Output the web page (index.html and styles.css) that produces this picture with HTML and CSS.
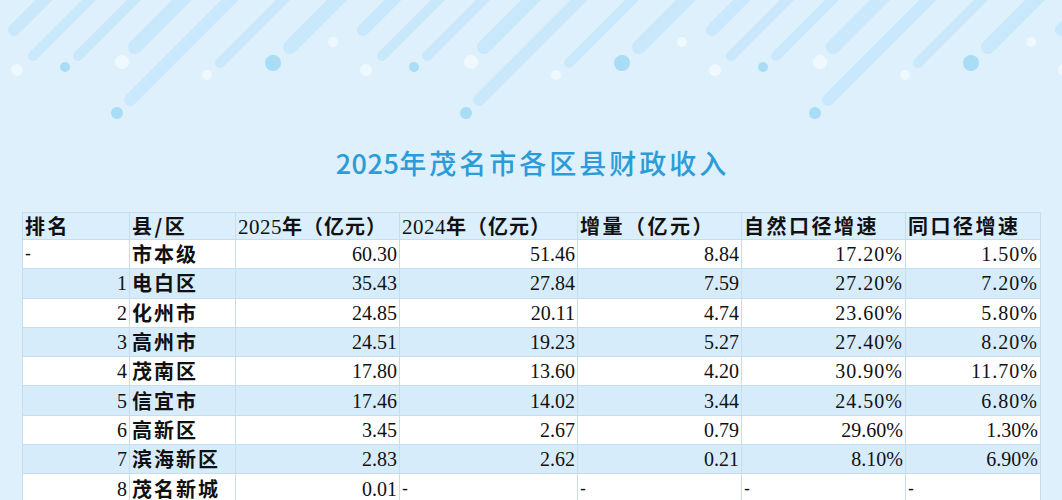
FILE: index.html
```html
<!DOCTYPE html>
<html lang="zh-CN">
<head>
<meta charset="utf-8">
<title>2025年茂名市各区县财政收入</title>
<link rel="stylesheet" href="styles.css">
</head>
<body>
<svg class="deco" width="1062" height="140" viewBox="0 0 1062 140" aria-hidden="true">
  <defs>
    <g id="tile">
      <g stroke="#c9e8fb" stroke-linecap="round">
        <line x1="14" y1="30" x2="54" y2="-10" stroke-width="12"/>
        <line x1="33" y1="56" x2="99" y2="-10" stroke-width="10"/>
        <line x1="78" y1="56" x2="144" y2="-10" stroke-width="10"/>
        <line x1="135" y1="47" x2="192" y2="-10" stroke-width="14"/>
        <line x1="130" y1="100" x2="240" y2="-10" stroke-width="12"/>
        <line x1="220" y1="63" x2="293" y2="-10" stroke-width="10"/>
        <line x1="290" y1="47" x2="347" y2="-10" stroke-width="14"/>
      </g>
      <g fill="#a9dcf5">
        <circle cx="65" cy="67" r="5"/>
        <circle cx="117" cy="113" r="6"/>
        <circle cx="273" cy="63" r="8"/>
      </g>
      <g fill="#eef8fe">
        <circle cx="17" cy="70" r="6"/>
        <circle cx="122" cy="62" r="7"/>
        <circle cx="207" cy="75" r="5"/>
        <circle cx="333" cy="42" r="5"/>
      </g>
    </g>
  </defs>
  <use href="#tile" x="-349"/>
  <use href="#tile" x="0"/>
  <use href="#tile" x="349"/>
  <use href="#tile" x="698"/>
  <use href="#tile" x="1047"/>
</svg>

<main class="page">
  <h1 class="title"><span class="title-num">2025</span>年茂名市各区县财政收入</h1>
  <table class="data">
    <colgroup>
      <col class="c-rank"><col class="c-name"><col class="c-y25"><col class="c-y24"><col class="c-inc"><col class="c-nat"><col class="c-same">
    </colgroup>
    <thead>
      <tr>
        <th>排名</th><th>县/区</th><th class="unit"><span class="num">2025</span>年（亿元）</th><th class="unit"><span class="num">2024</span>年（亿元）</th><th>增量（亿元）</th><th>自然口径增速</th><th>同口径增速</th>
      </tr>
    </thead>
    <tbody>
      <tr class="w"><td class="dash">-</td><td class="name">市本级</td><td>60.30</td><td>51.46</td><td>8.84</td><td class="pct">17.20%</td><td class="pct">1.50%</td></tr>
      <tr class="b"><td>1</td><td class="name">电白区</td><td>35.43</td><td>27.84</td><td>7.59</td><td class="pct">27.20%</td><td class="pct">7.20%</td></tr>
      <tr class="w"><td>2</td><td class="name">化州市</td><td>24.85</td><td>20.11</td><td>4.74</td><td class="pct">23.60%</td><td class="pct">5.80%</td></tr>
      <tr class="b"><td>3</td><td class="name">高州市</td><td>24.51</td><td>19.23</td><td>5.27</td><td class="pct">27.40%</td><td class="pct">8.20%</td></tr>
      <tr class="w"><td>4</td><td class="name">茂南区</td><td>17.80</td><td>13.60</td><td>4.20</td><td class="pct">30.90%</td><td class="pct">11.70%</td></tr>
      <tr class="b"><td>5</td><td class="name">信宜市</td><td>17.46</td><td>14.02</td><td>3.44</td><td class="pct">24.50%</td><td class="pct">6.80%</td></tr>
      <tr class="w"><td>6</td><td class="name">高新区</td><td>3.45</td><td>2.67</td><td>0.79</td><td>29.60%</td><td>1.30%</td></tr>
      <tr class="b"><td>7</td><td class="name">滨海新区</td><td>2.83</td><td>2.62</td><td>0.21</td><td>8.10%</td><td>6.90%</td></tr>
      <tr class="w"><td>8</td><td class="name">茂名新城</td><td>0.01</td><td class="dash">-</td><td class="dash">-</td><td class="dash">-</td><td class="dash">-</td></tr>
    </tbody>
  </table>
</main>
</body>
</html>
```

FILE: styles.css
```css
html, body {
  margin: 0;
  padding: 0;
}

body {
  width: 1062px;
  height: 500px;
  overflow: hidden;
  background: #ddf0fc;
  position: relative;
  font-family: "Liberation Serif", "Noto Sans CJK SC", serif;
  color: #111;
}

.deco {
  position: absolute;
  top: 0;
  left: 0;
  display: block;
}

.page {
  position: relative;
  padding-top: 143px;
}

.title {
  margin: 0;
  height: 40px;
  line-height: 40px;
  text-align: center;
  font-family: "Noto Sans CJK SC", "Noto Sans", sans-serif;
  font-weight: 500;
  font-size: 27px;
  color: #2b9cd8;
  letter-spacing: 3px;
  padding-left: 3px;
}

.title-num {
  letter-spacing: 0.5px;
}

.data {
  margin: 29px 0 0 22px;
  border-collapse: collapse;
  table-layout: fixed;
  width: 1018px;
}

.c-rank { width: 107px; }
.c-name { width: 106px; }
.c-y25 { width: 164px; }
.c-y24 { width: 178px; }
.c-inc { width: 164px; }
.c-nat { width: 164px; }
.c-same { width: 135px; }

.data th,
.data td {
  border: 1px solid #c7dded;
  padding: 0 2px;
  white-space: nowrap;
}

.data thead tr {
  height: 27px;
  background: #daeefb;
}

.data th {
  text-align: left;
  font-family: "Noto Sans CJK SC", sans-serif;
  font-weight: 700;
  font-size: 20px;
  letter-spacing: 2.5px;
  line-height: 24px;
}

.data th.unit {
  letter-spacing: 1px;
}

.data th .num {
  font-family: "Liberation Serif", serif;
  font-weight: 400;
  font-size: 21px;
  letter-spacing: 0.5px;
}

.data tbody tr {
  height: 29.3px;
}

.data tbody tr.w { background: #ffffff; }
.data tbody tr.b { background: #d7ecfa; }

.data td {
  text-align: right;
  font-size: 20px;
  line-height: 24px;
}

.data td.pct {
  letter-spacing: 1px;
}

.data td.name {
  text-align: left;
  font-family: "Noto Sans CJK SC", sans-serif;
  font-weight: 700;
  font-size: 20px;
  letter-spacing: 2px;
}

.data td.dash {
  text-align: left;
  font-family: "Liberation Sans", sans-serif;
  font-size: 18px;
}
```
